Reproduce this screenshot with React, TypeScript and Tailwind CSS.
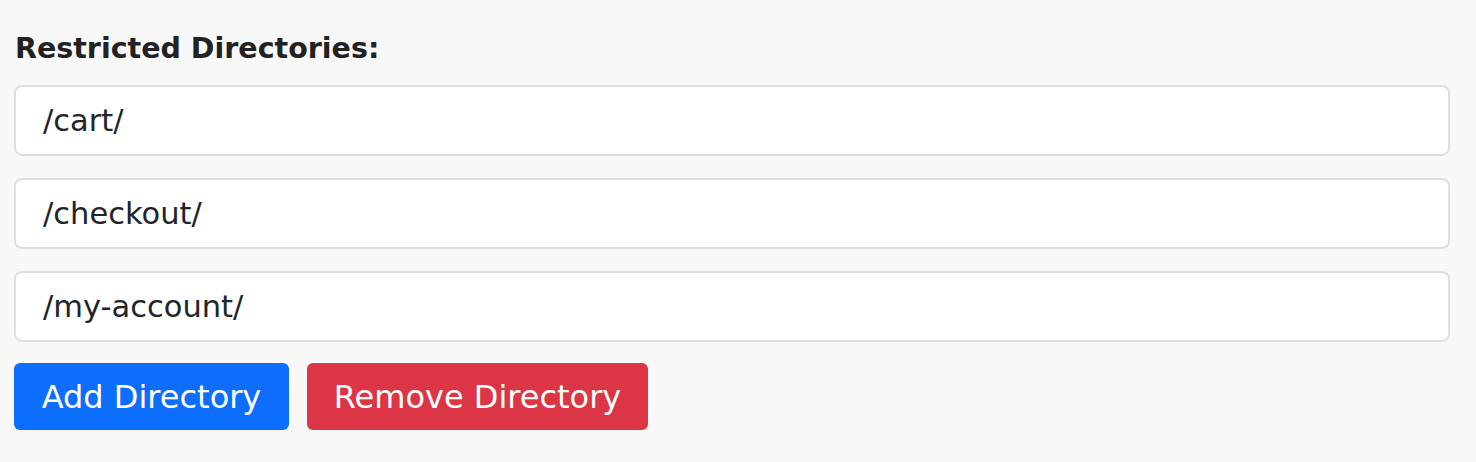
const dirs = ['/cart/', '/checkout/', '/my-account/'];

export default function App() {
  return (
    <div className="min-h-screen w-full bg-[#f8f8f8] px-[14px] pt-[29px] font-['DejaVu_Sans',sans-serif] text-[#222222]">
      <label className="block text-[28.5px] font-bold leading-[40px] pl-px">Restricted Directories:</label>
      <div className="mt-[16px] flex flex-col gap-[22px]">
        {dirs.map((d) => (
          <input
            key={d}
            type="text"
            defaultValue={d}
            className="h-[71px] w-[1436px] rounded-[8px] border-2 border-[#dedede] bg-white px-[27px] text-[30.5px] text-[#212529] outline-none"
          />
        ))}
      </div>
      <div className="mt-[21px] flex gap-[18px]">
        <button className="h-[67px] w-[275px] rounded-[6px] bg-[#0d6efd] text-[32px] text-white">Add Directory</button>
        <button className="h-[67px] w-[341px] rounded-[6px] bg-[#dc3545] text-[32px] text-white">Remove Directory</button>
      </div>
    </div>
  );
}
